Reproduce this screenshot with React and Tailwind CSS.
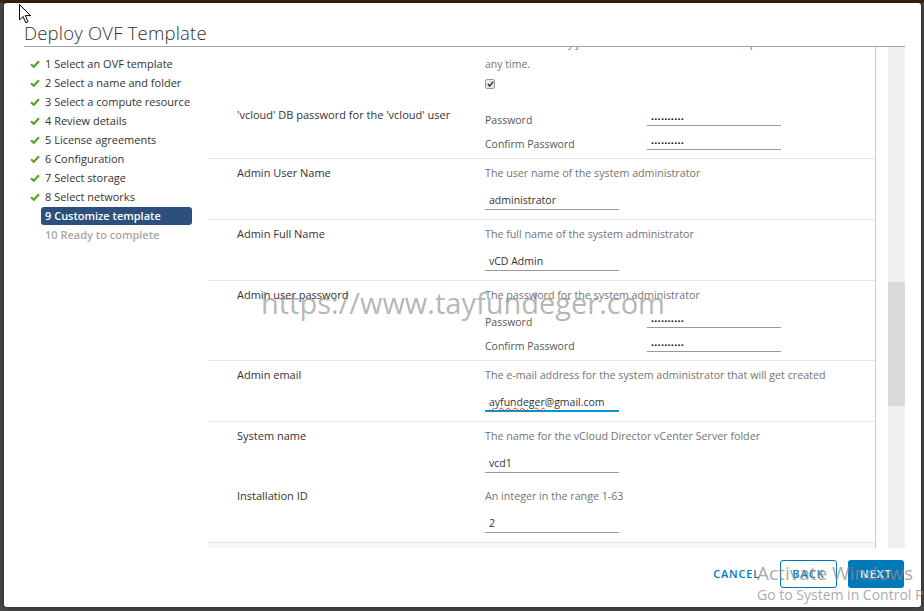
import React from "react";

const font = { fontFamily: '"Open Sans", "Liberation Sans", sans-serif' };

const steps = [
  { n: "1", t: "Select an OVF template", done: true },
  { n: "2", t: "Select a name and folder", done: true },
  { n: "3", t: "Select a compute resource", done: true },
  { n: "4", t: "Review details", done: true },
  { n: "5", t: "License agreements", done: true },
  { n: "6", t: "Configuration", done: true },
  { n: "7", t: "Select storage", done: true },
  { n: "8", t: "Select networks", done: true },
  { n: "9", t: "Customize template", active: true },
  { n: "10", t: "Ready to complete", disabled: true },
];

const Check = () => (
  <svg width="10" height="8" viewBox="0 0 10 8">
    <path d="M1 4.2 L3.8 6.8 L9 1.2" fill="none" stroke="#5ca126" strokeWidth="2.2" />
  </svg>
);

const Dots = () => (
  <span className="text-[8px] tracking-[0.3px] text-[#111]">••••••••••</span>
);

// one line of a password pair (label + underlined input)
const PwLine = ({ label }) => (
  <div className="flex h-[24px]">
    <div className="w-[162px] leading-[24px] text-[10.5px] text-[#565656]">{label}</div>
    <div className="w-[134px] h-[20px] -mt-[2px] border-b border-[#9a9a9a] pl-[4px] leading-[20px]">
      <Dots />
    </div>
  </div>
);

const TextInput = ({ value, focus }) => (
  <div
    className={
      "w-[134px] h-[20px] mt-[10px] pl-[4px] leading-[20px] text-[10.5px] text-[#333] " +
      (focus ? "border-b-2 border-[#0095d3]" : "border-b border-[#9a9a9a]")
    }
  >
    {value}
  </div>
);

const Row = ({ label, desc, children, last = false }) => (
  <div
    className={
      "grid grid-cols-[248px_1fr] pl-[29px] pt-[7px] " +
      (last ? "h-[60px]" : "h-[61px] border-b border-[#e6e6e6]")
    }
  >
    <div className="text-[11px] leading-[14px] text-[#333]">{label}</div>
    <div>
      <div className="text-[10.7px] leading-[14px] text-[#747474] whitespace-nowrap">{desc}</div>
      {children}
    </div>
  </div>
);

export default function App() {
  return (
    <div className="relative w-[924px] h-[611px] overflow-hidden bg-[#4a4a4a]" style={font}>
      <div className="h-[3px] bg-[#3b2612]" />
      <div className="ml-[4px] w-[917px] h-[604px] bg-white rounded-[3px] flex flex-col shadow-[0_0_6px_rgba(0,0,0,0.5)]">
        {/* header */}
        <div className="ml-[20px] mr-[16px] h-[44px] border-b border-[#a3a3a3] pt-[19px]">
          <h1 className="text-[18.5px] leading-[22px] font-light tracking-[0.2px] text-[#313131]">Deploy OVF Template</h1>
        </div>

        {/* body */}
        <div className="flex h-[501px]">
          <nav className="w-[204px] pl-[26px] pt-[7px]">
            {steps.map((s) => (
              <div key={s.n} className="flex items-center h-[19px]">
                <div className="w-[11px] flex items-center">{s.done && <Check />}</div>
                <div
                  className={
                    "w-[151px] h-[18px] px-[4px] leading-[18px] rounded-[3px] text-[11px] whitespace-nowrap " +
                    (s.active
                      ? "bg-[#2c4f7c] text-white font-semibold"
                      : s.disabled
                      ? "text-[#a8a8a8] font-semibold"
                      : "text-[#333]")
                  }
                >
                  {s.n} {s.t}
                </div>
              </div>
            ))}
          </nav>

          <div className="w-[668px] border-r border-[#c9c9c9] overflow-hidden">
            <div className="-mt-[14px]">
              {/* CEIP / vcloud DB password (scrolled) */}
              <div className="h-[126px] pl-[29px] border-b border-[#e6e6e6]">
                <div className="ml-[248px] text-[10.5px] leading-[20px] text-[#747474] whitespace-nowrap">
                  <div className="h-[21px]">the CEIP. You may join or leave VMware's CEIP for this product at</div>
                  <div>any time.</div>
                </div>
                <div className="ml-[248px] mt-[5px] w-[10px] h-[10px] border border-[#999] rounded-[2px] bg-[#e9e9e9] flex items-center justify-center">
                  <svg width="7" height="6" viewBox="0 0 7 6">
                    <path d="M0.8 3 L2.6 5 L6.2 0.8" fill="none" stroke="#333" strokeWidth="1.4" />
                  </svg>
                </div>
                <div className="grid grid-cols-[248px_1fr] mt-[19px]">
                  <div className="text-[11px] leading-[14px] text-[#333]">'vcloud' DB password for the 'vcloud' user</div>
                  <div>
                    <PwLine label="Password" />
                    <PwLine label="Confirm Password" />
                  </div>
                </div>
              </div>

              <Row label="Admin User Name" desc="The user name of the system administrator">
                <TextInput value="administrator" />
              </Row>
              <Row label="Admin Full Name" desc="The full name of the system administrator">
                <TextInput value="vCD Admin" />
              </Row>
              <div className="h-[80px] grid grid-cols-[248px_1fr] pl-[29px] pt-[7px] border-b border-[#e6e6e6]">
                <div className="text-[11px] leading-[14px] text-[#333]">Admin user password</div>
                <div>
                  <div className="text-[10.7px] leading-[14px] text-[#747474]">The password for the system administrator</div>
                  <div className="mt-[8px]">
                    <PwLine label="Password" />
                    <PwLine label="Confirm Password" />
                  </div>
                </div>
              </div>
              <Row label="Admin email" desc="The e-mail address for the system administrator that will get created">
                <TextInput
                  focus
                  value={
                    <>
                      <span className="underline decoration-wavy decoration-[#e03030] decoration-1 underline-offset-1">ayfundeger</span>@gmail.com
                    </>
                  }
                />
              </Row>
              <Row label="System name" desc="The name for the vCloud Director vCenter Server folder" last>
                <TextInput value="vcd1" />
              </Row>
              <Row label="Installation ID" desc="An integer in the range 1-63">
                <TextInput value="2" />
              </Row>
              <div className="h-[20px] bg-[#f6f6f6]" />
            </div>
          </div>

          {/* scrollbar */}
          <div className="ml-[12px] w-[17px] bg-[#efefef] pt-[235px]">
            <div className="h-[124px] bg-[#dadada]" />
          </div>
        </div>

        {/* footer */}
        <div className="flex justify-end items-center gap-[8px] pr-[17px] pt-[12px]">
          <button className="h-[28px] px-[12px] text-[11px] font-semibold tracking-[0.8px] text-[#0079b8]">CANCEL</button>
          <button className="w-[57px] h-[28px] rounded-[3px] border border-[#0079b8] text-[11px] font-semibold tracking-[1px] text-[#0079b8]">
            BACK
          </button>
          <button className="ml-[3px] w-[56px] h-[28px] rounded-[3px] bg-[#0079b8] text-[11px] font-semibold tracking-[1px] text-white">
            NEXT
          </button>
        </div>
      </div>

      {/* watermark overlays */}
      <div className="absolute left-[261px] top-[285px] text-[29px] leading-[36px] text-[rgba(120,120,120,0.55)] pointer-events-none whitespace-nowrap">
        https://www.tayfundeger.com
      </div>
      <div className="absolute left-[757px] top-[561px] text-[19px] leading-[24px] text-[rgba(140,140,140,0.75)] whitespace-nowrap">
        Activate Windows
      </div>
      <div className="absolute left-[757px] top-[585px] text-[14px] leading-[20px] text-[rgba(140,140,140,0.75)] whitespace-nowrap">
        Go to System in Control Panel to activate Windows.
      </div>

      {/* mouse cursor */}
      <svg className="absolute left-[19px] top-[4px]" width="13" height="20" viewBox="0 0 13 20">
        <path d="M0.5 0.5 L0.5 16 L4 12.5 L6.8 18.8 L9 17.8 L6.3 11.6 L11.5 11.6 Z" fill="#fff" stroke="#000" strokeWidth="1" />
      </svg>
    </div>
  );
}
